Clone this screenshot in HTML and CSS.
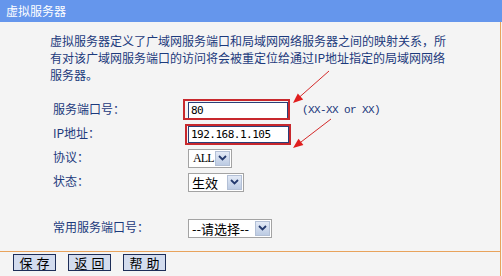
FILE: index.html
```html
<!DOCTYPE html>
<html lang="zh-CN">
<head>
<meta charset="utf-8">
<title>虚拟服务器</title>
<link rel="stylesheet" href="styles.css">
</head>
<body>
<div class="title">虚拟服务器</div>
<div class="frame">
  <div class="content">
    <p class="desc">虚拟服务器定义了广域网服务端口和局域网网络服务器之间的映射关系，所有对该广域网服务端口的访问将会被重定位给通过IP地址指定的局域网网络服务器。</p>
    <div class="form">
      <div class="row">
        <span class="label">服务端口号：</span>
        <span class="ctrl"><input class="text w-port" type="text" value="80"><span class="hint">(XX-XX or XX)</span></span>
      </div>
      <div class="row">
        <span class="label">IP地址：</span>
        <span class="ctrl"><input class="text w-ip" type="text" value="192.168.1.105"></span>
      </div>
      <div class="row">
        <span class="label">协议：</span>
        <span class="ctrl"><span class="select w-all"><span class="val val-lat">ALL</span><span class="drop"><svg width="9" height="6" viewBox="0 0 9 6"><path d="M1 1 L4.5 4.5 L8 1" fill="none" stroke="#243a6e" stroke-width="1.8"/></svg></span></span></span>
      </div>
      <div class="row">
        <span class="label">状态：</span>
        <span class="ctrl"><span class="select w-state"><span class="val">生效</span><span class="drop"><svg width="9" height="6" viewBox="0 0 9 6"><path d="M1 1 L4.5 4.5 L8 1" fill="none" stroke="#243a6e" stroke-width="1.8"/></svg></span></span></span>
      </div>
      <div class="row row-common">
        <span class="label">常用服务端口号：</span>
        <span class="ctrl"><span class="select w-common"><span class="val">--请选择--</span><span class="drop"><svg width="9" height="6" viewBox="0 0 9 6"><path d="M1 1 L4.5 4.5 L8 1" fill="none" stroke="#243a6e" stroke-width="1.8"/></svg></span></span></span>
      </div>
    </div>
  </div>
  <div class="buttons">
    <button class="btn" type="button">保 存</button>
    <button class="btn" type="button">返 回</button>
    <button class="btn" type="button">帮 助</button>
  </div>
</div>
<svg class="annot" width="502" height="276" viewBox="0 0 502 276">
  <rect x="184" y="100" width="105" height="19" fill="none" stroke="#c8282d" stroke-width="2"/>
  <rect x="186" y="125" width="104" height="19" fill="none" stroke="#c8282d" stroke-width="2"/>
  <line x1="329" y1="71" x2="299" y2="97.5" stroke="#d42a2a" stroke-width="1"/>
  <polygon points="293,103 303.2,99.4 297.8,93.4" fill="#e01e1e"/>
  <line x1="331" y1="119" x2="301" y2="142" stroke="#d42a2a" stroke-width="1"/>
  <polygon points="293,148 303.4,145.1 298.5,138.7" fill="#e01e1e"/>
</svg>
</body>
</html>
```
FILE: styles.css
```css
html, body {
  margin: 0;
  padding: 0;
}
body {
  width: 502px;
  height: 276px;
  overflow: hidden;
  background: #f4f4f4;
  font-family: "Noto Sans CJK SC", "Noto Sans", sans-serif;
  font-size: 12px;
  color: #1c3a7c;
  position: relative;
}
.title {
  height: 22px;
  line-height: 22px;
  background: #6596ec;
  color: #ffffff;
  padding-left: 6px;
  font-size: 12px;
}
.frame {
  width: 500px;
  height: 254px;
  border-right: 1px solid #e8a35c;
}
.content {
  box-sizing: border-box;
  height: 230px;
  padding-top: 10px;
  border-bottom: 1px solid #e8a35c;
}
.desc {
  margin: 0 0 0 50px;
  width: 400px;
  line-height: 17px;
}
.form {
  margin-top: 13px;
  padding-left: 53px;
}
.row {
  display: grid;
  grid-template-columns: 135px auto;
  align-items: center;
  height: 24px;
}
.row-common {
  margin-top: 22px;
}
.label {
  line-height: 17px;
}
.ctrl {
  display: flex;
  align-items: center;
  padding-top: 4px;
}
.text {
  box-sizing: border-box;
  height: 17px;
  margin: 0;
  padding: 0 2px;
  border: 1px solid #2b3f78;
  background: #ffffff;
  color: #000000;
  font-family: "DejaVu Sans Mono", monospace;
  font-size: 11px;
  letter-spacing: -0.5px;
  outline: none;
}
.w-port { width: 100px; }
.w-ip { width: 101px; }
.hint {
  margin-left: 14px;
  font-family: "Liberation Mono", "Courier New", monospace;
  font-size: 11px;
  letter-spacing: -0.6px;
  color: #18357a;
}
.select {
  box-sizing: border-box;
  display: flex;
  align-items: stretch;
  height: 19px;
  border: 1px solid #a3a3a3;
  background: #ffffff;
  color: #000000;
}
.val {
  flex: 1;
  padding-left: 3px;
  line-height: 17px;
  font-size: 13px;
}
.val-lat {
  font-family: "Liberation Serif", serif;
  font-size: 12px;
  letter-spacing: -0.9px;
  padding-left: 4px;
}
.drop {
  box-sizing: border-box;
  width: 15px;
  margin: 1px;
  border: 1px solid #b3c0d6;
  background: linear-gradient(#e3eaf6, #bccbe3);
  display: flex;
  align-items: center;
  justify-content: center;
}
.w-all { width: 44px; }
.w-state { width: 56px; }
.w-common { width: 84px; }
.buttons {
  display: flex;
  gap: 12px;
  padding: 2px 0 0 13px;
}
.btn {
  box-sizing: border-box;
  width: 43px;
  height: 17px;
  margin: 0;
  padding: 0;
  border: 1px solid #1e2e58;
  background: #d3dcee;
  color: #000000;
  font-family: "Noto Sans CJK SC", sans-serif;
  font-size: 13px;
  line-height: 15px;
  word-spacing: 1px;
}
.annot {
  position: absolute;
  left: 0;
  top: 0;
  pointer-events: none;
}
```
